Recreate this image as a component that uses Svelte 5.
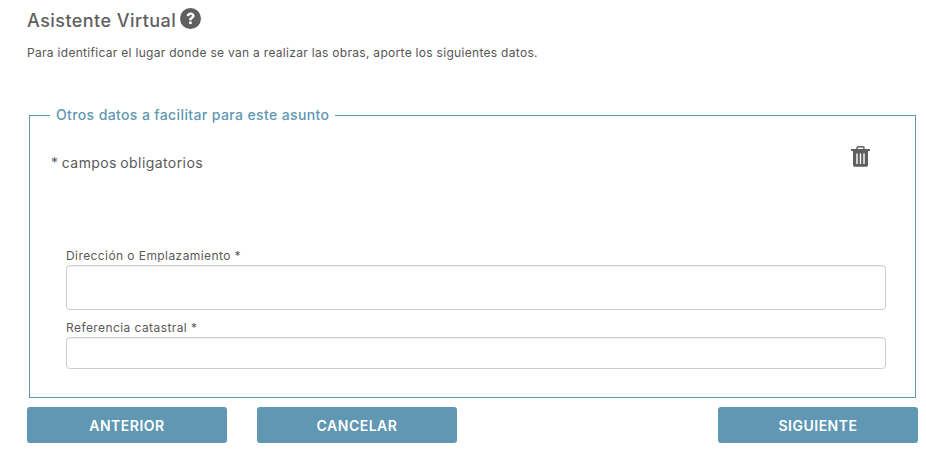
<script lang="ts">
	let direccion = $state('');
	let referencia = $state('');
</script>

<div class="page">
	<h1>
		Asistente Virtual
		<svg class="help" width="21" height="21" viewBox="0 0 24 24" aria-hidden="true">
			<circle cx="12" cy="12" r="12" fill="#5f5f5f" />
			<path d="M7.600 9.200c.2-2.700 2.100-4.200 4.600-4.200 2.600 0 4.500 1.500 4.500 3.800 0 1.800-1.100 2.700-2.200 3.400-.8.500-1.100.9-1.100 1.900h-3c0-1.900.6-2.800 1.900-3.600.9-.6 1.300-1 1.300-1.600 0-.7-.6-1.100-1.300-1.100-.9 0-1.400.5-1.600 1.500z" fill="#fff" />
			<rect x="10.400" y="15.400" width="3" height="3" fill="#fff" />
		</svg>
	</h1>
	<p class="intro">Para identificar el lugar donde se van a realizar las obras, aporte los siguientes datos.</p>

	<fieldset>
		<legend>Otros datos a facilitar para este asunto</legend>
		<div class="top">
			<span class="required">* campos obligatorios</span>
			<svg class="trash" width="19" height="21" viewBox="0 0 19 21" aria-hidden="true">
				<path d="M6 3.200V2.200C6 1.300 6.600.8 7.400.8h4.200c.8 0 1.400.5 1.400 1.400v1" fill="none" stroke="#5f5f5f" stroke-width="1.500" />
				<rect x="0" y="3" width="19" height="2" rx="0.500" fill="#5f5f5f" />
				<path d="M2 5h15v14c0 1-.7 1.800-1.700 1.800H3.700C2.700 20.800 2 20 2 19z" fill="#5f5f5f" />
				<path d="M6 7.500v10.500M9.500 7.500v10.500M13 7.500v10.500" stroke="#fff" stroke-width="1.400" />
			</svg>
		</div>
		<label for="direccion">Dirección o Emplazamiento *</label>
		<input id="direccion" class="tall" type="text" bind:value={direccion} />
		<label for="referencia">Referencia catastral *</label>
		<input id="referencia" type="text" bind:value={referencia} />
	</fieldset>

	<div class="actions">
		<button type="button">ANTERIOR</button>
		<button type="button">CANCELAR</button>
		<button type="button" class="next">SIGUIENTE</button>
	</div>
</div>

<style>
	:global(body) {
		background: #fff;
	}

	.page {
		padding: 10px 8px 0 27px;
		font-family: Inter, "DejaVu Sans", sans-serif;
		color: #5a5a5a;
	}

	h1 {
		display: flex;
		align-items: center;
		gap: 4px;
		margin: 0;
		height: 21px;
		font-size: 18px;
		font-weight: 500;
		color: #5f5f5f;
		letter-spacing: 0.45px;
	}

	.help {
		margin-top: -5px;
	}

	.intro {
		margin: 14px 0 0;
		font-size: 12px;
		font-weight: 400;
		line-height: 16px;
		color: #555;
		letter-spacing: 0.3px;
	}

	fieldset {
		margin: 45px 2px 0 2px;
		padding: 20px 29px 0 36px;
		border: 1px solid #5b97b3;
		min-width: 0;
		box-sizing: border-box;
		height: 292px;
	}

	legend {
		margin-left: -16px;
		padding: 0 6px;
		font-size: 14px;
		font-weight: 500;
		line-height: 18px;
		color: #6097b2;
		letter-spacing: 0.38px;
	}

	.top {
		display: flex;
		justify-content: space-between;
		align-items: flex-start;
		margin: 0 16px 0 -15px;
		height: 105px;
	}

	.required {
		margin-top: 10px;
		font-size: 14px;
		font-weight: 400;
		line-height: 18px;
		color: #5a5a5a;
		letter-spacing: 0.42px;
		word-spacing: -1px;
	}

	.trash {
		margin-top: 2px;
	}

	label {
		display: block;
		font-size: 12px;
		font-weight: 400;
		line-height: 14px;
		margin-bottom: 2px;
		color: #5a5a5a;
		letter-spacing: 0.42px;
	}

	input {
		display: block;
		box-sizing: border-box;
		width: 100%;
		height: 32px;
		margin: 0;
		padding: 0 8px;
		background: #fff;
		border: 1px solid #ccc;
		border-radius: 4px;
		box-shadow: inset 0 1px 1px rgba(0, 0, 0, 0.05);
	}

	input.tall {
		height: 45px;
		margin-bottom: 11px;
	}

	.actions {
		display: flex;
		gap: 30px;
		margin-top: 9px;
	}

	button {
		width: 200px;
		height: 36px;
		padding: 0;
		background: #6097b2;
		border: none;
		border-radius: 3px;
		color: #fff;
		font-family: inherit;
		font-size: 14px;
		font-weight: 600;
		letter-spacing: 0.5px;
	}

	.next {
		margin-left: auto;
	}
</style>
